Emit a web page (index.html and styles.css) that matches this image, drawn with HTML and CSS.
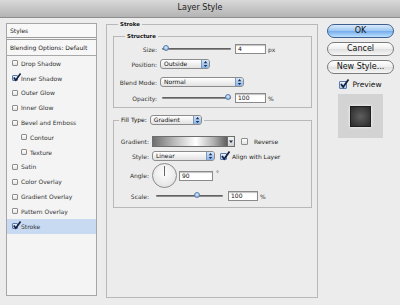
FILE: index.html
```html
<!DOCTYPE html>
<html lang="en">

<head>
    <meta charset="UTF-8">
    <meta name="viewport" content="width=device-width, initial-scale=1.0">
    <title>Layer Style</title>
    <link rel="stylesheet" href="styles.css">
</head>

<body>
    <div class="titlebar">Layer Style</div>

    <div class="dialog">
        <!-- Effects list -->
        <div class="sidebar">
            <div class="side-head">Styles</div>
            <div class="side-blend">Blending Options: Default</div>
            <ul class="effects">
                <li><span class="check"></span>Drop Shadow</li>
                <li><span class="check on"><svg viewBox="0 0 10 10"><path d="M2 5 L4.2 8 L9.5 0.5" /></svg></span>Inner Shadow</li>
                <li><span class="check"></span>Outer Glow</li>
                <li><span class="check"></span>Inner Glow</li>
                <li><span class="check"></span>Bevel and Emboss</li>
                <li class="sub"><span class="check"></span>Contour</li>
                <li class="sub"><span class="check"></span>Texture</li>
                <li><span class="check"></span>Satin</li>
                <li><span class="check"></span>Color Overlay</li>
                <li><span class="check"></span>Gradient Overlay</li>
                <li><span class="check"></span>Pattern Overlay</li>
                <li class="selected"><span class="check on"><svg viewBox="0 0 10 10"><path d="M2 5 L4.2 8 L9.5 0.5" /></svg></span>Stroke</li>
            </ul>
        </div>

        <!-- Stroke settings -->
        <fieldset class="group outer">
            <legend>Stroke</legend>

            <fieldset class="group structure">
                <legend>Structure</legend>
                <div class="rows rows-structure">
                    <div class="row">
                        <label class="lbl">Size:</label>
                        <div class="slider"><span class="knob" style="left:1px"></span></div>
                        <span class="field">4</span><span class="unit">px</span>
                    </div>
                    <div class="row">
                        <label class="lbl">Position:</label>
                        <span class="popup w-position">Outside<span class="arrows"><svg viewBox="0 0 8 9"><path d="M4 1 L6 3.5 H2 Z M4 8 L6 5.5 H2 Z" /></svg></span></span>
                    </div>
                    <div class="row">
                        <label class="lbl">Blend Mode:</label>
                        <span class="popup w-blend">Normal<span class="arrows"><svg viewBox="0 0 8 9"><path d="M4 1 L6 3.5 H2 Z M4 8 L6 5.5 H2 Z" /></svg></span></span>
                    </div>
                    <div class="row">
                        <label class="lbl">Opacity:</label>
                        <div class="slider"><span class="knob" style="left:63px"></span></div>
                        <span class="field">100</span><span class="unit">%</span>
                    </div>
                </div>
            </fieldset>

            <fieldset class="group fill">
                <legend><span class="legend-lbl">Fill Type:</span><span class="popup w-fill">Gradient<span class="arrows"><svg viewBox="0 0 8 9"><path d="M4 1 L6 3.5 H2 Z M4 8 L6 5.5 H2 Z" /></svg></span></span></legend>
                <div class="rows rows-fill">
                    <div class="row">
                        <label class="lbl">Gradient:</label>
                        <span class="gradbar"></span><span class="gradarrow"><svg viewBox="0 0 6 6"><path d="M1 2 H5 L3 4.5 Z" /></svg></span>
                        <span class="check big reverse"></span><span class="opt">Reverse</span>
                    </div>
                    <div class="row">
                        <label class="lbl">Style:</label>
                        <span class="popup w-style">Linear<span class="arrows"><svg viewBox="0 0 8 9"><path d="M4 1 L6 3.5 H2 Z M4 8 L6 5.5 H2 Z" /></svg></span></span>
                        <span class="check big on align"><svg viewBox="0 0 10 10"><path d="M2 5 L4.2 8 L9.5 0.5" /></svg></span><span class="opt">Align with Layer</span>
                    </div>
                    <div class="row">
                        <label class="lbl">Angle:</label>
                        <span class="dial"></span>
                        <span class="field w-angle">90</span><span class="deg">°</span>
                    </div>
                    <div class="row">
                        <label class="lbl">Scale:</label>
                        <div class="slider scale"><span class="knob" style="left:38px"></span></div>
                        <span class="field w-scale">100</span><span class="unit">%</span>
                    </div>
                </div>
            </fieldset>
        </fieldset>

        <!-- Buttons and preview -->
        <div class="actions">
            <button class="btn default">OK</button>
            <button class="btn">Cancel</button>
            <button class="btn">New Style...</button>
            <div class="preview-row">
                <span class="check big on"><svg viewBox="0 0 10 10"><path d="M2 5 L4.2 8 L9.5 0.5" /></svg></span>Preview
            </div>
            <div class="swatch"><div class="swatch-inner"></div></div>
        </div>
    </div>
</body>

</html>
```

FILE: styles.css
```css
/* General styling */
* {
    box-sizing: border-box;
}

body {
    margin: 0;
    width: 400px;
    height: 305px;
    overflow: hidden;
    background-color: #ececec;
    font-family: "DejaVu Sans", sans-serif;
    font-size: 6px;
    color: #222;
}

.titlebar {
    height: 18px;
    line-height: 15px;
    text-align: center;
    font-size: 8px;
    color: #1c1c1c;
    background: linear-gradient(#d9d9d9, #b3b3b3);
    border-bottom: 1px solid #8e8e8e;
}

.dialog {
    display: flex;
    align-items: flex-start;
}

/* Effects list */
.sidebar {
    margin: 5px 0 0 6px;
    width: 91px;
    height: 273px;
    border: 1px solid #a6a6a6;
    background-color: #f4f4f4;
}

.side-head {
    height: 16px;
    line-height: 13px;
    padding-left: 3px;
    background-color: #f8f8f8;
    border-bottom: 3px double #9c9c9c;
}

.side-blend {
    height: 16px;
    line-height: 15px;
    padding-left: 3px;
    background-color: #f7f7f7;
    border-bottom: 1px solid #a8a8a8;
}

.effects {
    list-style-type: none;
    margin: 0;
    padding: 0;
}

.effects li {
    display: flex;
    align-items: center;
    height: 14.8px;
    padding-left: 5px;
    color: #333;
}

.effects li.sub {
    padding-left: 14px;
}

.effects li.selected {
    background-color: #c7daf2;
}

.check {
    display: inline-block;
    position: relative;
    width: 6px;
    height: 6px;
    margin-right: 3px;
    border: 1px solid #8d8d8d;
    border-radius: 1px;
    background: linear-gradient(#ffffff, #e3e3e3);
}

.check.on {
    border-color: #5b7aa8;
    background: linear-gradient(#eaf3fd, #a9c8ee);
}

.check svg {
    position: absolute;
    left: -1px;
    top: -3px;
    width: 9px;
    height: 9px;
    overflow: visible;
}

.check svg path {
    fill: none;
    stroke: #14213f;
    stroke-width: 1.8;
}

.check.big {
    width: 7px;
    height: 7px;
}

.check.big svg {
    width: 10px;
    height: 10px;
}

/* Group boxes */
.group {
    margin: 0;
    padding: 0;
    min-width: 0;
    border: 1px solid #b8b8b8;
}

.group legend {
    padding: 0 2px;
    line-height: 10px;
    height: 10px;
    color: #111;
}

.outer {
    margin: 1px 0 0 9px;
    width: 212px;
    height: 279px;
    padding: 0 5px 0 6px;
}

.outer > legend {
    margin-left: 5px;
    font-weight: bold;
    font-size: 5.4px;
}

.structure {
    margin-top: 2px;
    width: 199px;
    height: 77px;
    padding-top: 2px;
}

.structure > legend {
    margin-left: 11px;
    font-weight: bold;
    font-size: 5.4px;
}

.fill {
    margin-top: 6px;
    width: 199px;
    height: 94px;
    padding-top: 9px;
}

.fill > legend {
    display: flex;
    align-items: center;
    height: 12px;
    margin-left: 5px;
}

.legend-lbl {
    margin-right: 3px;
}

/* Rows */
.rows {
    display: grid;
    align-items: center;
}

.rows-structure {
    grid-template-rows: 12px 18px 18px 14px;
}

.rows-fill {
    grid-template-rows: 12px 18px 21px 20px;
}

.row {
    display: flex;
    align-items: center;
}

.lbl {
    width: 46px;
    padding-right: 3px;
    text-align: right;
    color: #333;
}

.rows-fill .lbl {
    width: 38px;
}

/* Controls */
.slider {
    position: relative;
    width: 69px;
    height: 2px;
    margin: 0 4px 0 2px;
    border-radius: 1px;
    background: linear-gradient(#4e4e4e, #a0a0a0);
}

.slider.scale {
    width: 67px;
    margin: 0 5px 0 4px;
}

.knob {
    position: absolute;
    top: -3px;
    width: 6px;
    height: 6px;
    border: 1px solid #5a7fae;
    border-radius: 50%;
    background: radial-gradient(circle at 50% 35%, #e6f1fd, #6f9fd8);
}

.field {
    display: inline-block;
    width: 31px;
    height: 10px;
    line-height: 8px;
    padding-left: 2px;
    border: 1px solid #8a8a8a;
    background-color: white;
    box-shadow: inset 0 1px 1px #c4c4c4;
    color: #111;
}

.w-angle {
    width: 34px;
    margin-left: 2px;
}

.w-scale {
    width: 30px;
}

.unit {
    margin-left: 2px;
    color: #333;
}

.deg {
    margin-left: 3px;
    margin-bottom: 6px;
    color: #333;
}

.popup {
    display: inline-flex;
    align-items: center;
    justify-content: space-between;
    height: 10px;
    padding-left: 3px;
    border: 1px solid #8c8c8c;
    border-radius: 3px;
    background: linear-gradient(#ffffff, #e2e2e2);
    color: #111;
    line-height: 8px;
}

.w-position {
    width: 50px;
}

.w-blend {
    width: 84px;
}

.w-fill {
    width: 52px;
}

.w-style {
    width: 63px;
    margin-right: 5px;
}

.arrows {
    display: inline-block;
    width: 8px;
    height: 8px;
    border-left: 1px solid #7e98bd;
    border-radius: 0 2px 2px 0;
    background: linear-gradient(#d5e6fa, #86b2e6);
}

.arrows svg {
    display: block;
    width: 7px;
    height: 8px;
}

.arrows svg path {
    fill: #1b2b4d;
}

.gradbar {
    display: inline-block;
    width: 76px;
    height: 11px;
    border: 1px solid #6d6d6d;
    background: linear-gradient(to right, #6f6f6f, #bdbdbd 30%, #ffffff 58%, #b0b0b0 82%, #5e5e5e);
}

.gradarrow {
    display: inline-block;
    width: 7px;
    height: 11px;
    border: 1px solid #6d6d6d;
    border-left: none;
    background: linear-gradient(#f2f2f2, #cfcfcf);
}

.gradarrow svg {
    display: block;
    width: 6px;
    height: 9px;
}

.gradarrow svg path {
    fill: #1b2b4d;
}

.reverse {
    margin-left: 6px;
    margin-right: 6px;
}

.align {
    margin-right: 5px;
}

.opt {
    color: #222;
}

.dial {
    position: relative;
    display: inline-block;
    width: 25px;
    height: 25px;
    border: 1px solid #8a8a8a;
    border-radius: 50%;
    background: radial-gradient(circle at 50% 40%, #ffffff, #dcdcdc);
}

.dial::after {
    content: "";
    position: absolute;
    left: 11px;
    top: 2px;
    width: 1px;
    height: 10px;
    background-color: #666;
}

/* Buttons and preview */
.actions {
    display: flex;
    flex-direction: column;
    align-items: center;
    gap: 4px;
    margin: 6px 0 0 9px;
    width: 67px;
}

.btn {
    width: 67px;
    height: 14px;
    padding: 0;
    border: 1px solid #7b7b7b;
    border-radius: 7px;
    background: linear-gradient(#ffffff, #eeeeee 50%, #e0e0e0 51%, #f6f6f6);
    font-family: "DejaVu Sans", sans-serif;
    font-size: 8px;
    line-height: 12px;
    color: #111;
}

.btn.default {
    border-color: #3f5f90;
    background: linear-gradient(#d9ebfb, #9cc6f1 50%, #74aced 51%, #bde0fd);
}

.preview-row {
    display: flex;
    align-items: center;
    margin-top: 2px;
    font-size: 7.5px;
    color: #111;
}

.preview-row .check {
    width: 8px;
    height: 8px;
    margin-right: 5px;
}

.swatch {
    display: flex;
    align-items: center;
    justify-content: center;
    width: 45px;
    height: 44px;
    margin-top: 1px;
    background-color: #d3d3d3;
}

.swatch-inner {
    width: 21px;
    height: 21px;
    border: 1px solid #1e1e1e;
    background: radial-gradient(circle, #5e5e5e, #3a3a3a 70%, #2a2a2a);
    box-shadow: 0 0 3px #ffffff;
}
```
